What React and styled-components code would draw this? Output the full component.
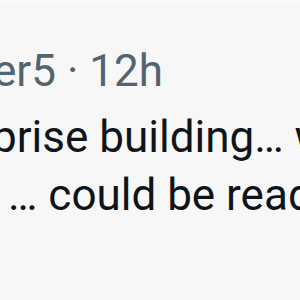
import React from 'react'
import styled, { createGlobalStyle } from 'styled-components';

const GlobalStyle = createGlobalStyle`
    html, body {
        margin: 0;
        padding: 0;
        background: #f7f7f7;
    }
    body {
        font-family: Roboto, "Liberation Sans", Arial, sans-serif;
        overflow: hidden;
    }
`;

const App = () => {
  return (
    <>
      <GlobalStyle />
      <Tweet>
        <Meta>er5 · 12h</Meta>
        <Body>
          <Line $indent={"-8px"}>prise building… w</Line>
          <Line $indent={"8px"}>… could be read</Line>
        </Body>
      </Tweet>
    </>
  )
}

export default App;

const Tweet = styled.article`
    width: 300px;
    height: 300px;
    overflow: hidden;
    background: #f7f7f7;
    border-top: 3px solid #fafafa;
    box-sizing: border-box;
    padding-top: 39px;
`;

const Meta = styled.div`
    margin-left: -7px;
    font-size: 44px;
    line-height: 58px;
    color: #536471;
    white-space: nowrap;
`;

const Body = styled.div`
    margin-top: 8px;
    font-size: 44px;
    line-height: 58px;
    color: #0f1419;
`;

const Line = styled.p`
    margin: 0 0 0 ${props => props.$indent ? props.$indent : 0};
    white-space: nowrap;
`;
